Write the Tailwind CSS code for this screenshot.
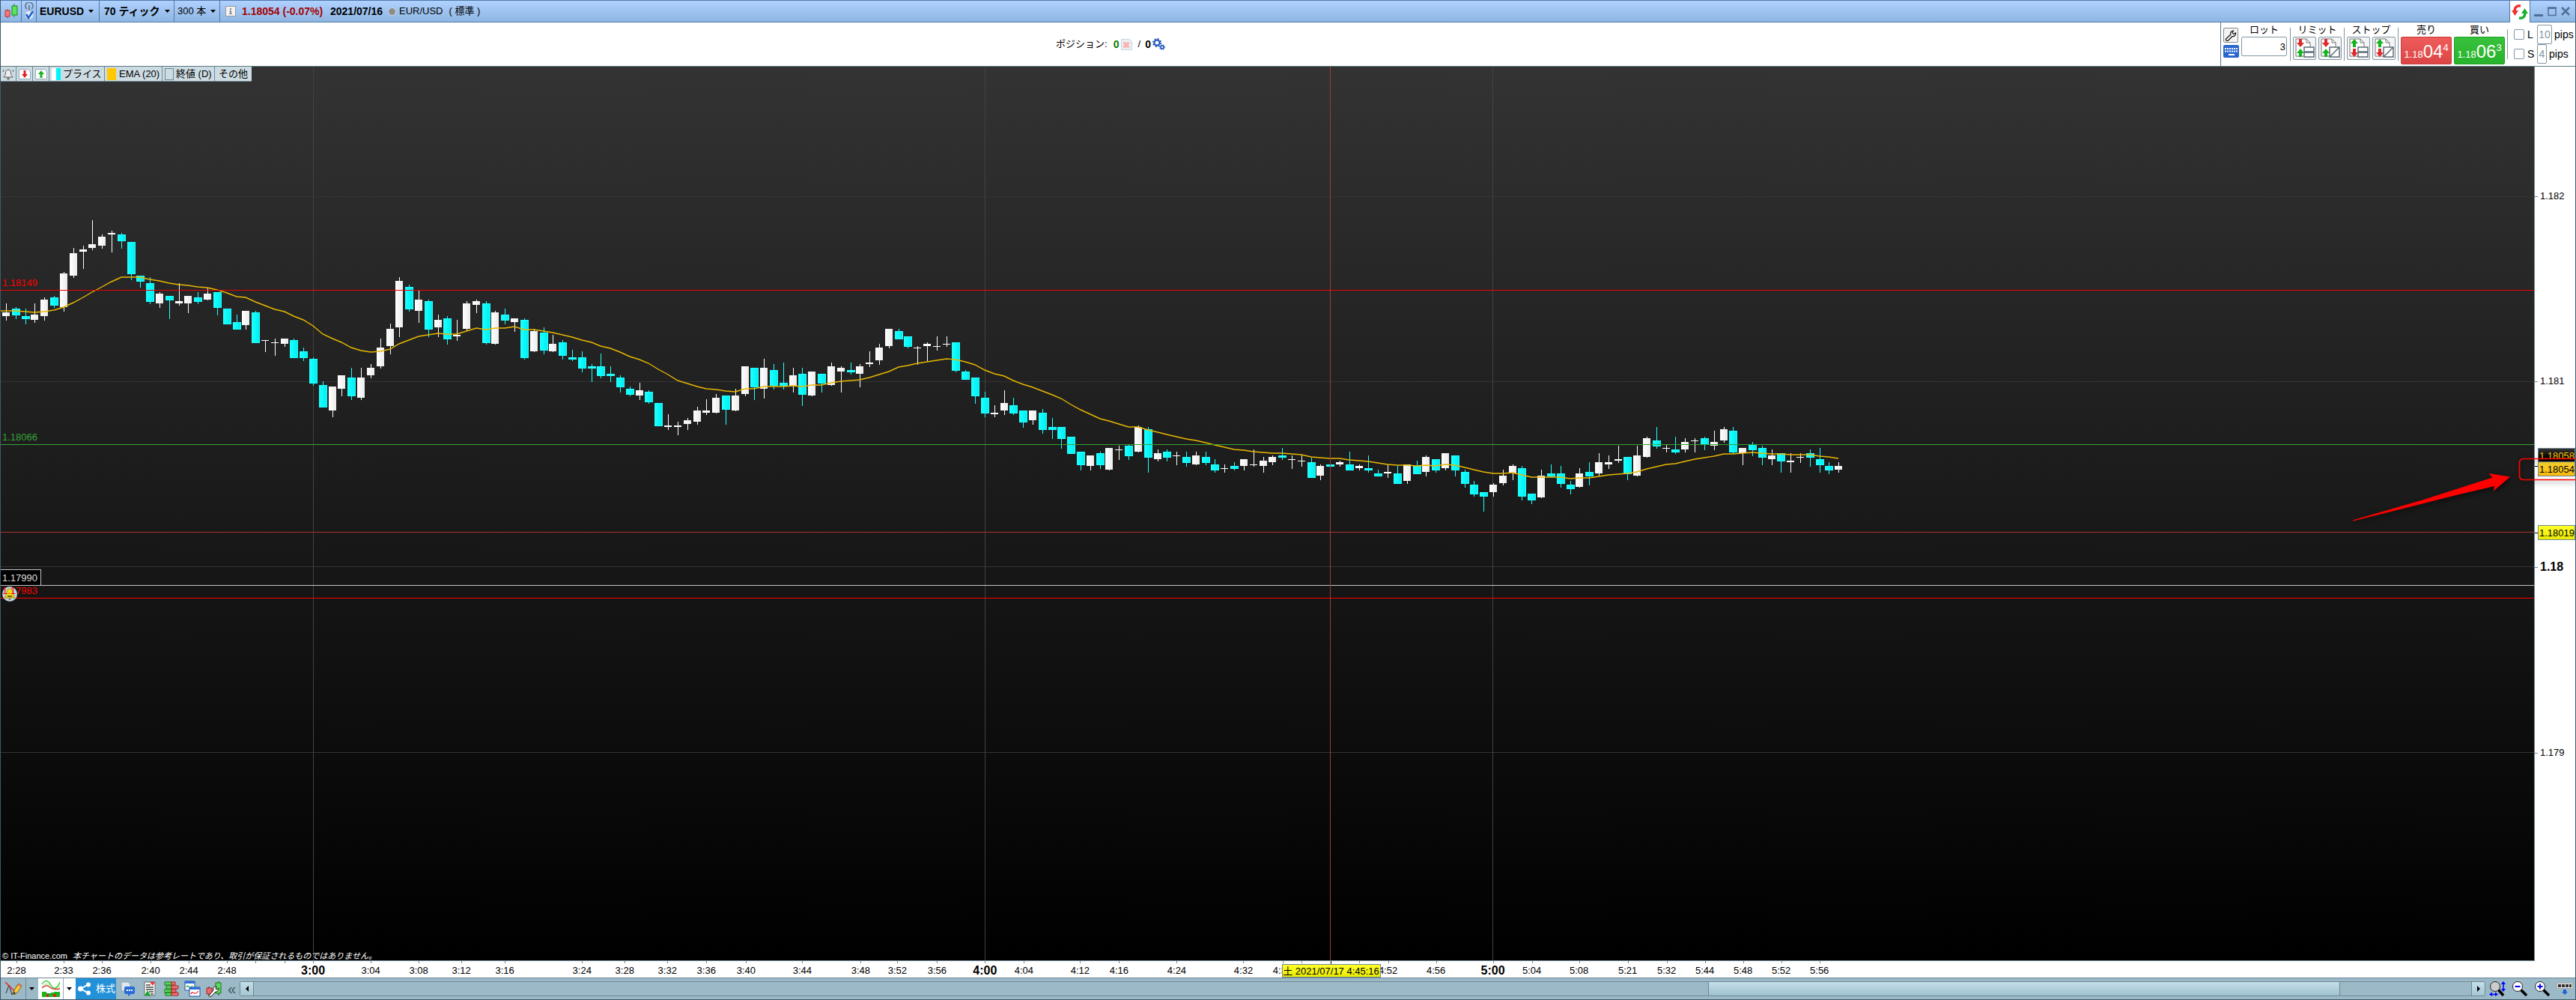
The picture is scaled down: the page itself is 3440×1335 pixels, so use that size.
<!DOCTYPE html>
<html lang="ja">
<head>
  <meta charset="UTF-8">
  <meta name="viewport" content="width=device-width, initial-scale=1.0">
  <title>EURUSD 70 ティック</title>
  <script src="https://cdn.jsdelivr.net/npm/@tailwindcss/browser@4"></script>
</head>
<body class="flex h-screen flex-col overflow-hidden border-x border-b border-[#3f5a6a] bg-white font-['Liberation_Sans','Noto_Sans_CJK_JP',sans-serif] text-[13px] leading-4 text-black">

  <!-- Title bar -->
  <header class="flex h-[30px] shrink-0 items-stretch border-y border-[#5079ab] bg-linear-to-b from-[#afd1ff] to-[#8fb6e2]">
    <div class="flex w-7 items-center justify-center border-r border-[#5079ab]">
      <svg class="h-5 w-5" viewBox="0 0 20 20"><path d="M5 7v12" stroke="#c22" stroke-width="1"/><rect x="2" y="9" width="6" height="8" fill="#f47b7b" stroke="#b33"/><path d="M14 0v18" stroke="#1a8a1a" stroke-width="1"/><rect x="11" y="3" width="7" height="12" fill="#5be35b" stroke="#1a8a1a"/></svg>
    </div>
    <div class="flex w-5 items-center justify-center border-r border-[#5079ab]">
      <svg class="h-6 w-4" viewBox="0 0 16 24"><g fill="none" stroke="#6e7f95" stroke-width="2"><path d="M5 9a5 5 0 1 1 6 0"/><path d="M8 4v7"/></g><circle cx="8" cy="17" r="6" fill="#dfe9f7" stroke="#9fb4d0"/><path d="M4 16l3 5 6-9" fill="none" stroke="#1d5fd1" stroke-width="2.5"/></svg>
    </div>
    <button class="flex w-[84px] items-center justify-between border-r border-[#5079ab] pr-1.5 pl-1 text-sm font-bold">EURUSD
      <svg class="h-1 w-2" viewBox="0 0 8 4"><path d="M0 0h7l-3.500 4z"/></svg>
    </button>
    <button class="flex w-[100px] items-center justify-between border-r border-[#5079ab] pr-1 pl-1.5 text-sm font-bold">70 ティック
      <svg class="h-1 w-2" viewBox="0 0 8 4"><path d="M0 0h7l-3.500 4z"/></svg>
    </button>
    <button class="flex w-[61px] items-center justify-between border-r border-[#5079ab] pr-1 pl-1">300 本
      <svg class="h-1 w-2" viewBox="0 0 8 4"><path d="M0 0h7l-3.500 4z"/></svg>
    </button>
    <div class="flex items-center pl-[7px]">
      <svg class="mr-2 h-[14px] w-[14px]" viewBox="0 0 14 14"><rect x=".5" y=".5" width="13" height="13" fill="#f2f2f2" stroke="#999"/><path d="M6 3h2v2H6zM5 6h3v4h1v1H5v-1h1V7H5z" fill="#888"/></svg>
      <strong class="w-[118px] text-sm whitespace-nowrap text-[#a50000]">1.18054 (-0.07%)</strong>
      <strong class="w-[77px] text-sm whitespace-nowrap">2021/07/16</strong>
      <span class="mr-1 h-[11px] w-[11px] rounded-full border border-[#d5dde8] bg-[#8c8c8c]"></span>
      <span>EUR/USD</span>
      <span class="ml-2">( 標準 )</span>
    </div>
    <div class="ml-auto flex">
      <button class="-mb-px flex w-7 items-center justify-center border-x border-[#5079ab] bg-white" aria-label="更新">
        <svg class="h-5 w-[22px]" viewBox="0 0 22 20"><path d="M12 2C7 1 4 4 4 9" fill="none" stroke="#e33" stroke-width="3.500"/><path d="M0 8h9l-4.500 7z" fill="#e33"/><path d="M10 18c5 1 8-2 8-7" fill="none" stroke="#1eae2e" stroke-width="3.500"/><path d="M13 12h9l-4.500-7z" fill="#1eae2e"/></svg>
      </button>
      <button class="ml-0.5 w-[18px]" aria-label="最小化"><svg class="mx-auto h-4 w-3" viewBox="0 0 12 16"><path d="M0 13.500h12" stroke="#4d7199" stroke-width="3"/></svg></button>
      <button class="w-[18px]" aria-label="最大化"><svg class="mx-auto h-4 w-3" viewBox="0 0 12 16"><path d="M1 3v10.500h10V3z" fill="none" stroke="#4d7199" stroke-width="1.500"/><path d="M0 4h12" stroke="#4d7199" stroke-width="2"/></svg></button>
      <button class="mr-1 w-[18px]" aria-label="閉じる"><svg class="mx-auto h-4 w-3" viewBox="0 0 12 16"><path d="M1 3l10 10M11 3L1 13" stroke="#4d7199" stroke-width="2.500"/></svg></button>
    </div>
  </header>

  <!-- Positions and order panel -->
  <section class="flex h-[59px] shrink-0 border-b border-[#5c7784]">
    <div class="flex flex-1 items-center justify-center">
      <span>ポジション:</span>
      <b class="ml-2 text-sm text-[#0a7d0a]">0</b>
      <svg class="ml-0.5 h-[15px] w-[15px]" viewBox="0 0 15 15"><path d="M.5.5h11l3 3v11H.5z" fill="#e9f1f7" stroke="#c5d5e2"/><path d="M3.500 4.500l7 7M10.500 4.500l-7 7" stroke="#ffb1b1" stroke-width="3.500"/></svg>
      <span class="ml-2">/</span>
      <b class="ml-1.5 text-sm">0</b>
      <svg class="ml-0.5 h-4 w-[17px]" viewBox="0 0 17 16"><circle cx="6" cy="6" r="3.500" fill="none" stroke="#1a53bd" stroke-width="2"/><circle cx="6" cy="6" r="5" fill="none" stroke="#1a53bd" stroke-width="2" stroke-dasharray="2 1.930"/><circle cx="13" cy="12" r="2" fill="none" stroke="#1a53bd" stroke-width="1.500"/><circle cx="13" cy="12" r="3" fill="none" stroke="#1a53bd" stroke-width="1.500" stroke-dasharray="1.300 1.060"/></svg>
    </div>

    <form class="flex items-start border-l border-[#5c7784] pt-[1px] pl-[3px]">
      <div class="mt-1.5 flex w-[21px] flex-col gap-[3px]">
        <button type="button" class="flex h-5 w-5 items-center justify-center rounded-xs border border-[#888] bg-[#f4f4f4]" aria-label="設定">
          <svg class="h-4 w-4" viewBox="0 0 16 16"><path d="M2 12.500l6-5.500C7 4.500 8.500 2 11.500 2L10 4.500l1.500 2L14.500 5c.5 3-2 5-4.500 4.500L4.500 15a1.700 1.700 0 0 1-2.500-2.500z" fill="#fff" stroke="#111" stroke-width="1.200"/></svg>
        </button>
        <button type="button" class="flex h-[17px] w-[21px] items-center justify-center rounded-xs bg-[#2a66cf]" aria-label="キーボード">
          <svg class="h-3 w-[17px]" viewBox="0 0 17 12" stroke="#fff" stroke-width="2" stroke-dasharray="2 1"><path d="M0 2h17M0 5.500h17"/><path d="M5 10h8" stroke-dasharray="none"/></svg>
        </button>
      </div>
      <div class="ml-[3px] flex w-[61px] flex-col items-center">
        <label for="lot" class="h-[18px] leading-[17px]">ロット</label>
        <input id="lot" class="h-[26px] w-full rounded-xs border border-[#8296a3] pr-px text-right" value="3">
      </div>
      <i class="mt-1.5 ml-1 h-11 w-px bg-[#8296a3]"></i>
      <div class="ml-[3px] flex w-[65px] flex-col items-center">
        <span class="h-[18px] leading-[17px]">リミット</span>
        <div class="flex gap-[3px]">
          <button type="button" class="h-[31px] w-[31px] rounded-xs border border-[#8296a3] bg-[#f5f5f5]" aria-label="リミット 1">
            <svg class="mx-auto h-[27px] w-[27px]" viewBox="0 0 27 27"><path d="M2 1h14l5 5v18H2z" fill="#fff" stroke="#777"/><path d="M16 1v5h5" fill="none" stroke="#777"/><path d="M13 12h13v6H13zM13 19h13v6H13z" fill="#fff" stroke="#5d6d78" stroke-width="1.500"/><path d="M6 1h4v5h3l-5 6-5-6h3z" fill="#e0282b"/><path d="M6 25h4v-5h3l-5-6-5 6h3z" fill="#14b41c"/></svg>
          </button>
          <button type="button" class="h-[31px] w-[31px] rounded-xs border border-[#8296a3] bg-[#f5f5f5]" aria-label="リミット 2">
            <svg class="mx-auto h-[27px] w-[27px]" viewBox="0 0 27 27"><path d="M2 1h14l5 5v18H2z" fill="#fff" stroke="#777"/><path d="M16 1v5h5" fill="none" stroke="#777"/><path d="M13 12h13v13H13zM13 25l13-13" fill="#fff" stroke="#5d6d78" stroke-width="1.500"/><path d="M6 1h4v5h3l-5 6-5-6h3z" fill="#e0282b"/><path d="M6 25h4v-5h3l-5-6-5 6h3z" fill="#14b41c"/></svg>
          </button>
        </div>
      </div>
      <i class="mt-1.5 ml-[3px] h-11 w-px bg-[#8296a3]"></i>
      <div class="ml-[3px] flex w-[65px] flex-col items-center">
        <span class="h-[18px] leading-[17px]">ストップ</span>
        <div class="flex gap-[3px]">
          <button type="button" class="h-[31px] w-[31px] rounded-xs border border-[#8296a3] bg-[#f5f5f5]" aria-label="ストップ 1">
            <svg class="mx-auto h-[27px] w-[27px]" viewBox="0 0 27 27"><path d="M2 1h14l5 5v18H2z" fill="#fff" stroke="#777"/><path d="M16 1v5h5" fill="none" stroke="#777"/><path d="M13 12h13v6H13zM13 19h13v6H13z" fill="#fff" stroke="#5d6d78" stroke-width="1.500"/><path d="M6 12h4V7h3L8 1 3 7h3z" fill="#14b41c"/><path d="M6 14h4v5h3l-5 6-5-6h3z" fill="#e0282b"/></svg>
          </button>
          <button type="button" class="h-[31px] w-[31px] rounded-xs border border-[#8296a3] bg-[#f5f5f5]" aria-label="ストップ 2">
            <svg class="mx-auto h-[27px] w-[27px]" viewBox="0 0 27 27"><path d="M2 1h14l5 5v18H2z" fill="#fff" stroke="#777"/><path d="M16 1v5h5" fill="none" stroke="#777"/><path d="M13 12h13v13H13zM13 25l13-13" fill="#fff" stroke="#5d6d78" stroke-width="1.500"/><path d="M6 12h4V7h3L8 1 3 7h3z" fill="#14b41c"/><path d="M6 14h4v5h3l-5 6-5-6h3z" fill="#e0282b"/></svg>
          </button>
        </div>
      </div>
      <i class="mt-1.5 ml-[3px] h-11 w-px bg-[#8296a3]"></i>
      <div class="ml-[3px] flex w-[68px] flex-col items-center">
        <span class="h-[18px] leading-[17px]">売り</span>
        <button type="button" class="flex h-[37px] w-full items-end justify-center rounded-xs border border-[#c93b3b] bg-linear-to-b from-[#ef5b5b] to-[#dc4545] pb-1.5 text-white">
          <span class="leading-3">1.18</span><span class="text-2xl leading-5">04</span><span class="self-start pt-1.5">4</span>
        </button>
      </div>
      <div class="ml-[3px] flex w-[68px] flex-col items-center">
        <span class="h-[18px] leading-[17px]">買い</span>
        <button type="button" class="flex h-[37px] w-full items-end justify-center rounded-xs border border-[#1f9d24] bg-linear-to-b from-[#38c13c] to-[#27b32c] pb-1.5 text-white">
          <span class="leading-3">1.18</span><span class="text-2xl leading-5">06</span><span class="self-start pt-1.5">3</span>
        </button>
      </div>
      <i class="mt-2 ml-[3px] h-10 w-px bg-[#8296a3]"></i>
      <div class="ml-2 flex w-[82px] flex-col pt-0.5">
        <div class="flex h-[26px] items-center">
          <input id="chkL" type="checkbox" class="h-[14px] w-[14px] appearance-none rounded-xs border border-[#8296a3] bg-white">
          <label for="chkL" class="ml-1 w-[13px] text-sm">L</label>
          <input class="h-[26px] w-5 rounded-xs border border-[#8296a3] text-center text-sm text-[#8296a3]" value="10" aria-label="L pips">
          <span class="ml-[3px] text-sm leading-5">pips</span>
        </div>
        <div class="flex h-[26px] items-center">
          <input id="chkS" type="checkbox" class="h-[14px] w-[14px] appearance-none rounded-xs border border-[#8296a3] bg-white">
          <label for="chkS" class="ml-1 w-[13px] text-sm">S</label>
          <input class="h-[26px] w-[13px] rounded-xs border border-[#8296a3] text-center text-sm text-[#8296a3]" value="4" aria-label="S pips">
          <span class="ml-[3px] text-sm leading-5">pips</span>
        </div>
      </div>
    </form>
  </section>

  <!-- Chart -->
  <main class="relative flex min-h-0 flex-1">
    <div class="relative min-w-0 flex-1 overflow-hidden border-r border-b border-[#6f8896] bg-linear-to-b/srgb from-[#333] to-black">
      <svg id="chart" class="absolute inset-0 h-full w-full" viewBox="1 89 3383 1193" preserveAspectRatio="none" shape-rendering="crispEdges">
        <defs>
          <linearGradient id="up"><stop offset="0" stop-color="#fff"/><stop offset="1" stop-color="#ebebeb"/></linearGradient>
          <linearGradient id="down"><stop offset="0" stop-color="#1affff"/><stop offset="1" stop-color="#00eff2"/></linearGradient>
        </defs>
      </svg>
      <div class="relative flex h-5 w-fit border-b border-[#6f8896] bg-[#cddce2]">
        <button class="flex w-[21px] items-center justify-center border-r border-[#6f8896]" aria-label="アラート"><svg class="h-4 w-4" viewBox="0 0 16 16"><path d="M8 2c3 0 3.500 3 3.500 5 0 2 1.500 3 2.500 5H2c1-2 2.500-3 2.500-5 0-2 .5-5 3.500-5zM7 13h2v2H7z" fill="#eee" stroke="#555"/><path d="M2 2L1 5M14 2l1 3" stroke="#555"/></svg></button>
        <button class="flex w-[22px] items-center justify-center border-r border-[#6f8896]" aria-label="売り注文"><svg class="h-4 w-4" viewBox="0 0 16 16"><path d="M.5 1.500h12l3 3v10H.5z" fill="#fff" stroke="#8fa9ba"/><path d="M6.500 3h3v5H12l-4 5-4-5h2.500z" fill="#e02020"/></svg></button>
        <button class="flex w-[22px] items-center justify-center border-r border-[#6f8896]" aria-label="買い注文"><svg class="h-4 w-4" viewBox="0 0 16 16"><path d="M.5 1.500h12l3 3v10H.5z" fill="#fff" stroke="#8fa9ba"/><path d="M6.500 13h3V8H12L8 3 4 8h2.500z" fill="#14b41c"/></svg></button>
        <button class="flex w-[74px] items-center border-r border-[#6f8896] pl-[3px]"><span class="mr-[3px] h-4 w-3 border-l-[6px] border-white bg-[#00f6ff]"></span>プライス</button>
        <button class="flex w-[77px] items-center border-r border-[#6f8896] pl-[3px]"><span class="mr-1 h-4 w-3 bg-[#ffc800]"></span>EMA (20)</button>
        <button class="flex w-[70px] items-center border-r border-[#6f8896] pl-[3px]"><span class="mr-[3px] h-4 w-3 border border-[#6f8896]"></span>終値 (D)</button>
        <button class="w-[49px] text-center">その他</button>
      </div>
      <div id="lineLabels"></div>
      <p class="absolute bottom-0 left-0.5 text-[11px] leading-3 whitespace-nowrap text-white">© IT-Finance.com <em class="ml-1">本チャートのデータは参考レートであり、取引が保証されるものではありません。</em></p>
    </div>
    <div id="priceAxis" class="relative w-[54px] shrink-0 bg-white"></div>

    <!-- Callout drawn over the last price -->
    <svg class="pointer-events-none absolute inset-0 h-full w-full drop-shadow-[2px_3px_3px_#0008]" viewBox="1 89 3438 1194" preserveAspectRatio="none">
      <path d="M3141.500 694.500L3235 667.500L3328.500 637.500L3323.500 632L3352 636.500L3330 655.500L3331 649L3280 661L3193 683L3142.500 695.500z" fill="#f00"/>
      <path d="M3442 612.500H3370q-5.500 0-5.500 5.500v17q0 5.500 5.500 5.500H3442" fill="none" stroke="#f00" stroke-width="1.700"/>
    </svg>
  </main>

  <!-- Time axis -->
  <div class="flex h-[22px] shrink-0">
    <div id="timeAxis" class="relative min-w-0 flex-1"></div>
    <div class="w-[54px]"></div>
  </div>

  <!-- Bottom toolbar -->
  <footer class="flex h-[29px] shrink-0 items-stretch border-t border-[#6f8896] bg-[#9bb9c6]">
    <button class="flex w-[34px] items-center justify-center border-r border-[#6f8896]" aria-label="描画"><svg class="h-5 w-[22px]" viewBox="0 0 22 20"><path d="M1 16L5 5l4 13L17 4" fill="none" stroke="#333"/><path d="M0 1l14 14" stroke="#e22" stroke-width="1.500"/><path d="M11 18l1-6 6-9 4 3-6 9z" fill="#fccd3a" stroke="#8a6413"/><path d="M11 18l1-4 2 2z" fill="#333"/><path d="M17 4l4 3" stroke="#e66" stroke-width="2"/></svg></button>
    <button class="flex w-4 items-center justify-center" aria-label="描画メニュー"><svg class="h-1 w-2" viewBox="0 0 8 4"><path d="M0 0h7l-3.500 4z"/></svg></button>
    <button class="flex w-[34px] items-center justify-center border-r border-[#9ab] bg-white" aria-label="指標"><svg class="h-6 w-6" viewBox="0 0 24 24"><path d="M0 9C5 3 8 3 12 8s7 3 12-4v8c-4 2-7 3-11 0S5 7 0 12z" fill="#d9efcf"/><path d="M0 6c4-6 8-6 12 1s8 5 12-4" fill="none" stroke="#2c2" stroke-width="1.300"/><path d="M0 11c6-6 9-2 12 0s6 2 12 1" fill="none" stroke="#d33" stroke-width="1.300"/><path d="M0 23v-7h6v2h6v5zM12 23v-6h4v-1h8v7z" fill="#19b51b"/><path d="M6 23v-4h3v4zM15 23v-4h4v4z" fill="#d22"/></svg></button>
    <button class="flex w-4 items-center justify-center bg-white" aria-label="指標メニュー"><svg class="h-1 w-2" viewBox="0 0 8 4"><path d="M0 0h7l-3.500 4z"/></svg></button>
    <button class="flex w-[54px] items-center bg-[#2490d8] pl-[3px] text-white"><svg class="mr-1.5 h-[18px] w-[18px]" viewBox="0 0 18 18"><path d="M14 3L4 9l10 6" fill="none" stroke="#fff" stroke-width="2"/><g fill="#fff"><circle cx="14" cy="3.500" r="3"/><circle cx="3.500" cy="9" r="3.500"/><circle cx="14" cy="14.500" r="3"/></g></svg>株式</button>
    <div class="flex items-center gap-[7px] pl-1.5">
      <button aria-label="チャット"><svg class="h-5 w-5" viewBox="0 0 20 20"><path d="M1 1h9l3 3v9H1z" fill="#dfe8f0" stroke="#8fa5b5"/><path d="M7 7h10q2 0 2 2v6q0 2-2 2h-3l-4 3v-3H7q-2 0-2-2V9q0-2 2-2z" fill="#2b6bd8"/><path d="M8 12h2M11 12h2M14 12h2" stroke="#fff" stroke-width="2"/></svg></button>
      <button class="w-6" aria-label="ニュース"><svg class="mx-auto h-5 w-4" viewBox="0 0 16 20"><path d="M1 1h14v18H1z" fill="#fff" stroke="#666"/><path d="M3 5h6M3 8h10M3 11h10M7 14h6M9 17h4" stroke="#444" stroke-width="1.500"/><path d="M8 1h7l-3 5z" fill="#e33"/><path d="M1 19l4-7 4 7z" fill="#1a2"/></svg></button>
      <button aria-label="板"><svg class="h-5 w-5" viewBox="0 0 20 20"><path d="M1 1h9v4H1zM3 6h7v4H3zM0 11h10v4H0zM2 15h8v4H2z" fill="#5bd75b" stroke="#167a1b"/><path d="M10 1h5v4h-5zM10 6h9v4h-9zM10 11h6v4h-6zM10 15h9v4h-9z" fill="#ee7474" stroke="#a22"/></svg></button>
      <button aria-label="ウィンドウ"><svg class="h-[22px] w-[22px]" viewBox="0 0 22 22"><path d="M1 1h13v12H1z" fill="#fff" stroke="#1d4fae"/><path d="M1 2.500h13" stroke="#2f6fdc" stroke-width="3"/><path d="M3 9c2-6 4 5 8-2" fill="none" stroke="#1a2" stroke-width="1.300"/><path d="M7 9h14v12H7z" fill="#fff" stroke="#1d4fae"/><path d="M7 10.500h14" stroke="#2f6fdc" stroke-width="3"/><path d="M9 18c2-6 5 4 10-4" fill="none" stroke="#e22" stroke-width="1.300"/></svg></button>
      <button aria-label="自動売買"><svg class="h-[22px] w-[22px]" viewBox="0 0 22 22"><path d="M4 8v12M17 1v19" stroke="#333"/><path d="M1 10h7v8H1z" fill="#ee6a6a" stroke="#a22"/><path d="M13 3h7v14h-7z" fill="#5bdb5b" stroke="#187a18"/><path d="M4 20l6-7c-1-3 1-6 4-5l-1 3 2 1 2-2c1 3-2 5-4 5l-6 6c-2 1-4 0-3-1z" fill="#fff" stroke="#111"/></svg></button>
      <button class="text-xl leading-5 text-[#3f5460]" aria-label="折りたたむ">«</button>
    </div>
    <div class="my-1 ml-[5px] flex flex-1 rounded-xs border border-[#6f8896]">
      <button class="flex w-[18px] items-center justify-center border-r border-[#6f8896] bg-linear-to-b from-[#c3dfea] to-[#a5c6d3]" aria-label="左へ"><svg class="h-2 w-1" viewBox="0 0 4 8"><path d="M4 0v8L0 4z"/></svg></button>
      <div class="flex flex-1"><div class="ml-[65.6%] w-[28.5%] border-x border-[#6f8896] bg-linear-to-b from-[#c3dfea] to-[#9fc1cf]"></div></div>
      <button class="flex w-[18px] items-center justify-center border-l border-[#6f8896] bg-linear-to-b from-[#c3dfea] to-[#a5c6d3]" aria-label="右へ"><svg class="h-2 w-1" viewBox="0 0 4 8"><path d="M0 0v8l4-4z"/></svg></button>
    </div>
    <div class="flex items-center gap-2 pr-[3px] pl-[5px]">
      <button aria-label="全体表示"><svg class="h-5 w-[22px]" viewBox="0 0 22 20"><path d="M12 11l7 8" stroke="#000" stroke-width="3.500"/><circle cx="8" cy="7" r="6.500" fill="#ccc" stroke="#222"/><path d="M19 2v10M2 17.500h8" stroke="#00f" stroke-width="1.500"/><path d="M16 4l3-4 3 4zM16 10l3 4 3-4zM4 14.500l-4 3 4 2.500zM8 14.500l4 3-4 2.500z" fill="#00f"/></svg></button>
      <button aria-label="縮小"><svg class="h-5 w-[22px]" viewBox="0 0 22 20"><path d="M12 11l8 8" stroke="#000" stroke-width="3.500"/><circle cx="8" cy="7" r="6.500" fill="#fff" stroke="#222"/><path d="M4.500 7h7" stroke="#00f" stroke-width="2"/></svg></button>
      <button aria-label="拡大"><svg class="h-5 w-[22px]" viewBox="0 0 22 20"><path d="M12 11l8 8" stroke="#000" stroke-width="3.500"/><circle cx="8" cy="7" r="6.500" fill="#fff" stroke="#222"/><path d="M4.500 7h7M8 3.500v7" stroke="#00f" stroke-width="2"/></svg></button>
      <button aria-label="ツールバー"><svg class="h-4 w-[22px]" viewBox="0 0 22 16"><path d="M.5.500h21v7H.5z" fill="#eee" stroke="#aaa"/><path d="M2 4h18" stroke="#333" stroke-width="4" stroke-dasharray="4 1"/><path d="M9 9h4v3h2l-4 4-4-4h2z" fill="#1d62d6"/></svg></button>
    </div>
  </footer>

  <script>
    const LEFT = 1, TOP = 89, W = 3383, H = 1193;
    const FIRST_X = 8, STEP = 12.813;

    // w = up, c = down; body top, body bottom, high, low
    const candles = `
w 417 422 405 428|c 412 421 410 426|c 422 426 412 433|w 420 427 405 431|w 400 422 397 428|c 397 408 395 411|w 365 410 363 416|w 338 368 331 371|w 333 336 328 359|w 326 331 294 334|
w 316 328 313 332|w 311 313 308 337|c 313 322 311 332|c 323 366 323 374|c 368 376 368 384|c 378 403 370 406|w 392 405 390 411|c 395 401 395 426|w 402 405 378 408|w 395 405 395 418|
c 397 403 390 406|w 392 400 385 401|c 390 411 390 421|c 412 433 412 433|c 430 440 420 440|w 415 434 415 440|c 417 458 415 458|w 454 455 454 470|w 457 458 452 475|w 452 459 452 463|
c 454 478 452 478|c 469 478 464 482|c 479 512 477 515|c 514 544 509 544|w 516 548 516 557|w 501 519 501 529|c 504 529 491 534|w 504 531 491 534|w 491 501 486 505|w 464 489 452 492|
w 439 462 432 473|w 375 437 370 450|c 383 413 380 416|w 400 415 388 431|c 402 440 400 450|w 427 437 420 450|c 425 453 422 460|w 447 449 427 455|w 405 439 402 442|w 402 407 400 418|
c 405 458 402 460|w 417 459 415 460|c 420 428 412 433|w 425 430 425 443|c 427 478 425 480|w 442 469 439 470|c 444 468 437 473|w 459 469 447 470|c 457 475 454 480|c 477 480 467 482|
c 477 492 469 497|c 489 492 486 510|c 489 502 472 505|c 499 502 489 510|c 504 517 501 524|c 519 527 516 529|w 521 528 511 534|c 523 537 521 539|c 538 569 538 569|w 568 570 553 574|
w 568 570 563 581|w 561 566 558 574|w 548 563 543 567|w 548 551 533 554|w 531 551 526 552|c 528 547 528 567|w 528 548 519 549|w 489 526 489 529|c 491 517 491 534|w 491 519 479 532|
c 494 515 486 520|c 511 515 484 520|w 501 516 491 524|c 499 527 491 542|w 496 528 496 529|c 499 512 499 524|w 489 514 484 515|w 491 496 489 524|c 494 497 484 500|w 489 499 486 517|
w 484 486 469 490|w 464 481 459 487|w 439 462 439 465|c 442 453 439 453|c 449 463 449 465|w 464 465 462 487|w 459 462 457 482|w 462 463 449 468|w 459 460 449 463|c 457 495 457 497|
c 496 507 494 507|c 504 529 504 539|c 531 552 523 557|w 551 553 541 557|w 538 548 521 554|c 541 552 531 554|c 548 564 548 571|w 548 561 548 567|c 551 574 546 579|c 570 574 558 586|
c 570 586 570 599|c 583 606 583 606|c 603 621 603 628|w 608 622 608 628|c 605 621 603 626|w 598 627 598 628|w 600 601 595 614|c 595 609 593 614|w 570 603 568 604|c 573 611 570 631|
w 605 613 600 616|c 603 611 600 616|w 608 609 603 621|c 610 618 603 623|w 608 620 603 621|c 610 618 603 621|c 620 628 613 631|w 625 626 620 631|c 622 626 617 628|w 613 622 613 628|
w 620 621 600 623|w 615 622 610 631|w 610 617 608 621|c 608 611 598 614|w 613 614 608 626|w 615 616 608 623|c 617 638 611 638|w 622 635 620 641|c 620 623 620 623|w 617 620 615 623|
c 620 628 603 628|w 622 625 620 628|c 625 628 608 631|c 632 636 627 636|w 630 632 620 638|c 632 646 622 646|w 620 642 620 646|c 622 633 615 633|w 610 630 608 636|c 613 628 613 631|
w 605 625 605 628|c 608 628 608 636|c 630 646 627 651|c 647 660 642 663|c 657 663 657 683|w 647 657 645 663|w 635 645 627 648|w 622 632 620 641|c 625 663 622 668|c 659 668 659 673|
w 635 664 627 665|c 632 636 620 637|c 632 646 622 651|c 647 653 642 660|w 632 650 625 651|c 630 636 617 648|w 617 632 605 636|w 617 620 608 626|w 613 615 595 618|c 610 633 610 641|
w 608 635 595 636|w 585 610 583 611|c 588 596 570 599|w 598 599 594 604|c 600 604 583 606|w 590 600 585 604|w 588 589 585 604|c 585 594 583 601|w 590 595 575 601|w 573 588 570 591|
c 575 604 570 606|w 598 605 598 621|c 593 601 590 609|c 598 611 595 621|w 608 613 600 621|c 605 616 605 631|w 615 617 605 631|w 610 611 605 618|c 605 611 600 623|c 613 621 598 631|
c 622 628 617 633|w 622 627 617 631`.trim().split('|').map(s => s.trim().split(' '));

    const ema = [
      415,415,416,417,416,414,410,404,397,390,383,376,370,370,370,373,375,378,380,381,383,384,387,391,396,
      397,403,408,413,416,422,427,435,446,452,457,464,468,470,469,466,459,454,449,447,445,446,446,442,438,
      440,438,438,436,440,440,442,444,447,450,454,457,462,465,470,476,480,485,493,500,508,512,516,519,520,
      522,523,519,519,516,516,516,515,516,514,514,511,509,508,507,504,500,496,490,488,485,483,481,479,480,
      483,487,494,499,502,508,513,517,522,527,532,540,547,553,559,562,566,570,570,574,577,580,583,586,588,
      591,594,597,600,601,603,604,605,605,606,607,610,611,612,612,614,615,616,618,620,621,621,622,621,622,
      620,621,624,627,630,632,632,631,634,637,637,637,637,639,638,638,636,634,633,632,630,626,623,620,619,
      616,613,611,609,606,606,605,604,605,606,606,607,607,607,609,610,612
    ];

    const rect = (x, y, w, h, fill) => `<rect x="${x}" y="${y}" width="${w}" height="${h}" fill="${fill}"/>`;
    const hline = (y, color) => rect(LEFT, y, W, 1, color);
    const vline = (x, color) => rect(x, TOP, 1, H, color);

    let out = '';
    [262, 509, 756, 1004].forEach(y => out += hline(y, '#343434'));
    [418, 1315, 1993].forEach(x => out += vline(x, '#424242'));

    candles.forEach(([kind, top, bottom, high, low], i) => {
      const x = Math.round(FIRST_X + i * STEP);
      const h = bottom - top;
      if (kind === 'w') {
        out += rect(x, high, 1, low - high, '#fff');
        out += rect(x - 5, top, 10, h, h > 3 ? 'url(#up)' : '#fff');
      } else {
        out += rect(x, high, 1, low - high, '#2ff');
        out += rect(x - 5, top, 11, h, '#2ff');
        if (h > 3) out += rect(x - 4, +top + 1, 9, h - 2, 'url(#down)');
      }
    });

    const points = ema.map((y, i) => `${Math.round(FIRST_X + i * STEP)},${y}`).join(' ');
    out += `<polyline points="1,415 ${points}" fill="none" stroke="#e8b800" stroke-width="1.4" shape-rendering="auto"/>`;

    out += hline(387, '#f00000') + hline(593, '#36a336') + hline(710, '#a53535');
    out += hline(781, '#c4c4c4') + hline(798, '#f00');
    out += vline(1776, '#9c3b3b');
    document.getElementById('chart').insertAdjacentHTML('beforeend', out);

    const pctY = y => `top:${(y - TOP) / H * 100}%`;
    const pctX = x => `left:${(x - LEFT) / W * 100}%`;

    document.getElementById('lineLabels').innerHTML = `
      <span class="absolute left-0.5 -translate-y-full text-[#f00]" style="${pctY(386)}">1.18149</span>
      <span class="absolute left-0.5 -translate-y-full text-[#36a336]" style="${pctY(592)}">1.18066</span>
      <span class="absolute left-0 h-[22px] w-[54px] -translate-y-full border border-l-0 border-[#c4c4c4] bg-black pl-0.5 leading-[22px] text-[#ddd]" style="${pctY(782)}">1.17990</span>
      <svg class="absolute left-0.5 h-5 w-5" style="${pctY(783)}" viewBox="0 0 20 20"><circle cx="10" cy="10" r="10" fill="#c3d4dd"/><path d="M10 3c3 0 3.500 3 4 6 .5 3 2 4 3 6H3c1-2 2.500-3 3-6 .5-3 1-6 4-6z" fill="#f6df14" stroke="#a58a00"/><path d="M7 13h6M9 17h2" stroke="#443800" stroke-width="1.500"/></svg>
      <span class="absolute left-0.5 -translate-y-full text-[#f00]" style="${pctY(797)}">1.17983</span>`;

    document.getElementById('priceAxis').innerHTML =
      [[262, '1.182'], [509, '1.181'], [756, '1.18'], [1004, '1.179']].map(([y, t]) => `
        <i class="absolute left-0 h-px w-1 bg-[#6f8896]" style="${pctY(y)}"></i>
        <span class="absolute left-[7px] -translate-y-1/2 ${t === '1.18' ? 'text-base leading-4 font-bold' : ''}" style="${pctY(y)}">${t}</span>`).join('') +
      `<i class="absolute left-0 h-px w-1 bg-black" style="${pctY(622)}"></i>
       <i class="absolute left-0 h-px w-1 bg-black" style="${pctY(710)}"></i>
       <span class="absolute left-1 h-5 w-[50px] border border-[#6f8896] bg-linear-to-b from-[#333] to-black pl-px leading-[20px] text-[#ffc800]" style="${pctY(598)}">1.18058</span>
       <span class="absolute left-1 h-5 w-[50px] border border-[#6f8896] bg-linear-to-b from-[#ffd92e] to-[#f4b70c] pl-px leading-[20px]" style="${pctY(616)}">1.18054</span>
       <span class="absolute left-1 h-5 w-[50px] border border-[#6f8896] bg-linear-to-b from-[#ffff26] to-[#eaea00] pl-px leading-[20px]" style="${pctY(700)}">1.18019</span>`;

    const times = [
      [22, '2:28'], [85, '2:33'], [136, '2:36'], [201, '2:40'], [252, '2:44'], [303, '2:48'], [341, ''], [380, ''],
      [418, '3:00'], [495, '3:04'], [559, '3:08'], [616, '3:12'], [674, '3:16'], [777, '3:24'], [834, '3:28'],
      [891, '3:32'], [943, '3:36'], [996, '3:40'], [1071, '3:44'], [1149, '3:48'], [1198, '3:52'], [1251, '3:56'],
      [1315, '4:00'], [1367, '4:04'], [1442, '4:12'], [1494, '4:16'], [1571, '4:24'], [1660, '4:32'], [1712, '4:36'],
      [1737, ''], [1814, ''], [1853, '4:52'], [1917, '4:56'], [1993, '5:00'], [2045, '5:04'], [2108, '5:08'],
      [2173, '5:21'], [2225, '5:32'], [2276, '5:44'], [2327, '5:48'], [2378, '5:52'], [2429, '5:56']
    ];
    document.getElementById('timeAxis').innerHTML = times.map(([x, t]) => `
      <i class="absolute top-0 h-[3px] w-px bg-[#6f8896]" style="${pctX(x)}"></i>
      <span class="absolute top-[5px] -translate-x-1/2 ${t.endsWith(':00') ? 'text-base leading-4 font-bold' : ''}" style="${pctX(x)}">${t}</span>`).join('') + `
      <i class="absolute top-0 h-1 w-px bg-black" style="${pctX(1776)}"></i>
      <span class="absolute top-1 h-[18px] w-[132px] -translate-x-1/2 border border-[#6f8896] bg-linear-to-b from-[#ffff26] to-[#eaea00] text-center leading-[18px] whitespace-nowrap" style="${pctX(1777)}">土 2021/07/17 4:45:16</span>`;
  </script>
</body>
</html>
